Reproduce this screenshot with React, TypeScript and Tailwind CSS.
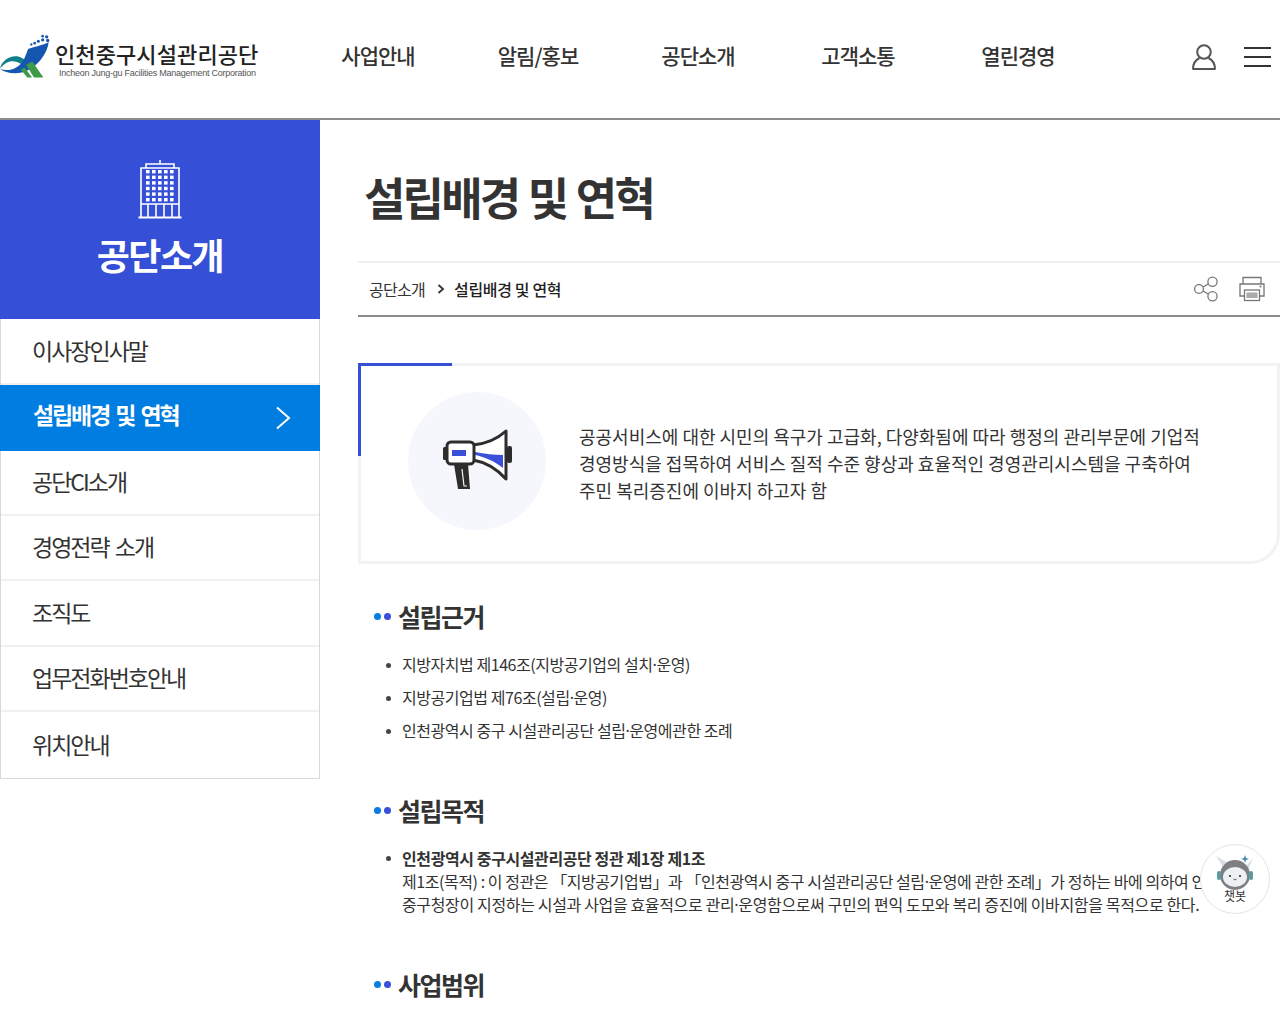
const navItems = ["사업안내", "알림/홍보", "공단소개", "고객소통", "열린경영"];

const sideItems = [
  { label: "이사장인사말", h: "h-[66px]" },
  { label: "설립배경 및 연혁", h: "h-[66px]", active: true },
  { label: "공단CI소개", h: "h-[65px]" },
  { label: "경영전략 소개", h: "h-[65px]" },
  { label: "조직도", h: "h-[66px]" },
  { label: "업무전화번호안내", h: "h-[65px]" },
  { label: "위치안내", h: "h-[66px]" },
];

const legalBasis = ["지방자치법 제146조(지방공기업의 설치·운영)", "지방공기업법 제76조(설립·운영)", "인천광역시 중구 시설관리공단 설립·운영에관한 조례"];

// the middle dot of the CJK font is too wide here, so it comes from the latin one
function withDots(text: string) {
  return text.split("·").map((part, i) => (
    <span key={i}>
      {i > 0 && <span className="leading-none font-['Noto_Sans',sans-serif]">·</span>}
      {part}
    </span>
  ));
}

function Logo() {
  return (
    <svg width="50" height="47" viewBox="0 40 150 140" className="shrink-0">
      <path d="M0 150 C5 125 30 108 55 113 C72 117 86 132 94 148 L80 152 C70 136 50 124 30 128 C15 132 8 140 0 150 Z" fill="#0f7f8c" />
      <path d="M85 90 C100 85 130 78 146 70 C142 100 122 130 92 150 C60 170 20 166 0 150 C25 160 55 150 70 125 C78 110 80 100 85 90 Z" fill="#1557b0" />
      <path d="M78 138 L102 176 L130 176 L97 128 Z" fill="#3d9a46" />
      <path d="M62 152 L82 176 L96 176 L74 146 Z" fill="#3d9a46" />
      <g fill="#1557b0">
        <circle cx="140" cy="54" r="5" />
        <circle cx="128" cy="52" r="4" />
        <circle cx="143" cy="65" r="5" />
        <circle cx="128" cy="63" r="5" />
        <circle cx="115" cy="67" r="4.5" />
        <circle cx="104" cy="73" r="4" />
        <circle cx="94" cy="77" r="3.5" />
      </g>
    </svg>
  );
}

function BuildingIcon() {
  const cells = [];
  for (let r = 0; r < 6; r++) {
    for (let c = 0; c < 5; c++) {
      cells.push(<rect key={`${r}-${c}`} x={8 + c * 6} y={11 + r * 5.6} width="3.6" height="3.4" fill="#fff" />);
    }
  }
  return (
    <svg width="44" height="60" viewBox="0 0 44 60" fill="none" stroke="#fff" strokeWidth="1.6">
      <path d="M3 58 V9 H41 V58" />
      <path d="M8 9 V5 H36 V9" />
      <path d="M22 5 V1" />
      <path d="M0.5 58.5 H43.5" strokeWidth="2" />
      <path d="M3 45 H41 M10 45 V58 M18 45 V58 M26 45 V58 M34 45 V58" />
      <g stroke="none">{cells}</g>
    </svg>
  );
}

function Megaphone() {
  return (
    <svg width="72" height="62" viewBox="0 0 72 62" fill="none">
      <path d="M33 16 C45 15 56 11 66 2 V50 C56 39 45 33 33 31 Z" fill="#fff" stroke="#2d2d2d" strokeWidth="3" strokeLinejoin="round" />
      <path d="M35 23 C45 25 54 26 63 26 V39 C54 32 45 28 35 26 Z" fill="#3a50d9" />
      <rect x="7" y="13" width="27" height="22" rx="4" fill="#fff" stroke="#2d2d2d" strokeWidth="3" />
      <rect x="3" y="18" width="4" height="13" rx="1.5" fill="#2d2d2d" />
      <rect x="67" y="17" width="5" height="17" rx="2" fill="#2d2d2d" />
      <rect x="12" y="21" width="14" height="6" fill="#3a50d9" />
      <path d="M14 35 H28 L30 60 H18 Z" fill="#2d2d2d" />
      <path d="M22 40 L24 57 H27" stroke="#f6f7fc" strokeWidth="1.2" />
    </svg>
  );
}

function ShareIcon() {
  return (
    <svg width="28" height="28" viewBox="0 0 28 28" fill="none" stroke="#777" strokeWidth="1.3">
      <circle cx="7" cy="14" r="4.4" />
      <circle cx="20.5" cy="6.8" r="4.6" />
      <circle cx="20.5" cy="21.2" r="4.6" />
      <path d="M11 12 L16.2 9 M11 16 L16.2 19" />
    </svg>
  );
}

function PrintIcon() {
  return (
    <svg width="28" height="28" viewBox="0 0 28 28" fill="none" stroke="#777" strokeWidth="1.3">
      <path d="M5 9 V2.5 H23 V9" />
      <path d="M6 21 H2 V9 H26 V21 H22" />
      <rect x="6.5" y="15" width="15" height="10.5" />
      <rect x="8.5" y="17.5" width="11" height="5.5" fill="#aaa" stroke="none" />
      <circle cx="22.5" cy="11.5" r="1" fill="#777" stroke="none" />
    </svg>
  );
}

function ChatbotFace() {
  return (
    <svg width="40" height="36" viewBox="0 0 40 36">
      <path d="M9 13 L1 1 L13 8 Z" fill="#d5dde6" />
      <path d="M31 11 L38 3 L33 15 Z" fill="#d5dde6" />
      <path d="M30 0 l1 3 3 1 -3 1 -1 3 -1 -3 -3 -1 3 -1 Z" fill="#3f88b8" />
      <circle cx="20" cy="20" r="15" fill="#7d7f83" />
      <rect x="2" y="16" width="4" height="9" rx="2" fill="#5d9aa0" />
      <rect x="34" y="16" width="4" height="9" rx="2" fill="#5d9aa0" />
      <ellipse cx="20" cy="22" rx="12" ry="10" fill="#eef1f4" />
      <circle cx="15" cy="21" r="1.1" fill="#333" />
      <circle cx="25" cy="21" r="1.1" fill="#333" />
      <path d="M18.5 24 Q20 26 21.5 24" stroke="#555" strokeWidth="1" fill="none" />
    </svg>
  );
}

function SectionTitle({ children }: { children: string }) {
  return (
    <h3 className="flex items-center pl-[16px] text-[25px] leading-[36px] font-bold tracking-[-1.5px] text-[#333]">
      <span className="h-[7px] w-[7px] rounded-full bg-[#0a7de0]" />
      <span className="ml-[3px] h-[7px] w-[7px] rounded-full bg-[#3a50d9]" />
      <span className="ml-[7px]">{children}</span>
    </h3>
  );
}

function Bullet() {
  return <span className="absolute top-[9px] left-[-16px] h-[5px] w-[5px] rounded-full bg-[#444]" />;
}

export default function App() {
  return (
    <div className="relative h-[1024px] w-[1280px] overflow-hidden bg-white text-[#333] font-['Noto_Sans_CJK_KR','Noto_Sans',sans-serif]">
      <header className="flex h-[120px] items-center border-b-2 border-[#8c8c8c] pb-[7px]">
        <div className="flex w-[298px] items-center">
          <Logo />
          <div className="ml-[5px] flex flex-col pt-[8px]">
            <span className="text-[22px] leading-[27px] font-medium tracking-[0.1px] text-[#222]">인천중구시설관리공단</span>
            <span className="mt-[1px] ml-[4px] text-[9px] leading-[11px] tracking-[-0.25px] whitespace-nowrap text-[#555] font-['Liberation_Sans',sans-serif]">
              Incheon Jung-gu Facilities Management Corporation
            </span>
          </div>
        </div>
        <nav className="flex">
          {navItems.map((item) => (
            <a key={item} className="w-[160px] text-center text-[21px] font-medium tracking-[-1px] text-[#333]">
              {item}
            </a>
          ))}
        </nav>
        <div className="mt-[2px] ml-auto flex items-center pr-[9px]">
          <svg width="28" height="28" viewBox="0 0 28 28" fill="none" stroke="#555" strokeWidth="2">
            <circle cx="14" cy="9" r="6.8" />
            <path d="M3 26 C3 20 6.5 16.5 9.5 15 M25 26 C25 20 21.5 16.5 18.5 15 M2.5 26 H25.5" />
          </svg>
          <div className="ml-[26px] flex w-[27px] flex-col gap-[7px]">
            <span className="h-[2px] bg-[#333]" />
            <span className="h-[2px] bg-[#333]" />
            <span className="h-[2px] bg-[#333]" />
          </div>
        </div>
      </header>

      <div className="flex">
        <aside className="w-[320px] shrink-0">
          <div className="flex h-[199px] flex-col items-center bg-[#3550d6] pt-[39px]">
            <BuildingIcon />
            <h2 className="mt-[9px] text-[36px] leading-[52px] font-bold tracking-[-1.5px] text-white">공단소개</h2>
          </div>
          <ul className="border-x border-b border-[#d8d8d8]">
            {sideItems.map((item) => (
              <li
                key={item.label}
                className={`flex items-center justify-between text-[23px] ${item.h} ${
                  item.active
                    ? "-mx-px border-0 bg-[#007de0] pr-[29px] pb-[7px] pl-[33px] text-[21px] font-bold tracking-[-2.1px] text-white [word-spacing:3px]"
                    : "border-b-2 border-[#f0f0f0] pb-[2px] pl-[31px] tracking-[-2px] text-[#333] [word-spacing:3px] last:border-b-0"
                }`}
              >
                {item.label}
                {item.active && (
                  <svg width="16" height="24" viewBox="0 0 16 24" fill="none" stroke="#fff" strokeWidth="2" className="mt-[7px]">
                    <path d="M2 1.5 L14 12 L2 22.5" />
                  </svg>
                )}
              </li>
            ))}
          </ul>
        </aside>

        <main className="ml-[38px] min-w-0 flex-1">
          <h1 className="h-[141px] pt-[44px] pl-[6px] text-[45px] leading-[66px] font-bold tracking-[-2.8px] text-[#333] [word-spacing:2px]">설립배경 및 연혁</h1>
          <div className="flex h-[56px] items-center border-y-2 border-t-[#f0f0f0] border-b-[#8c8c8c] pr-[14px] pb-[1px] pl-[11px] text-[16px] tracking-[-0.7px]">
            <span className="text-[#333]">공단소개</span>
            <svg width="8" height="10" viewBox="0 0 8 10" fill="none" stroke="#333" strokeWidth="1.8" className="mx-[12px]">
              <path d="M1.5 1 L6 5 L1.5 9" />
            </svg>
            <span className="-ml-[3px] font-medium tracking-[-0.35px] text-[#222]">설립배경 및 연혁</span>
            <span className="ml-auto flex items-center gap-[18px]">
              <ShareIcon />
              <PrintIcon />
            </span>
          </div>

          <section className="relative mt-[46px] flex h-[201px] items-center rounded-br-[30px] border-[3px] border-[#f2f2f2] pr-[60px] pl-[47px]">
            <span className="absolute top-[-3px] left-[-3px] h-[3px] w-[94px] bg-[#3550d6]" />
            <span className="absolute top-[-3px] left-[-3px] h-[93px] w-[3px] bg-[#3550d6]" />
            <div className="mt-[-5px] flex h-[138px] w-[138px] shrink-0 items-center justify-center rounded-full bg-[#f6f7fc] pr-[2px] pb-[2px]">
              <Megaphone />
            </div>
            <p className="ml-[33px] text-[18px] leading-[27px] tracking-normal whitespace-nowrap text-[#333]">
              공공서비스에 대한 시민의 욕구가 고급화, 다양화됨에 따라 행정의 관리부문에 기업적
              <br />
              경영방식을 접목하여 서비스 질적 수준 향상과 효율적인 경영관리시스템을 구축하여
              <br />
              주민 복리증진에 이바지 하고자 함
            </p>
          </section>

          <section className="mt-[34px]">
            <SectionTitle>설립근거</SectionTitle>
            <ul className="mt-[14px] pl-[44px] text-[16px] leading-[33px] tracking-[-0.45px] text-[#333]">
              {legalBasis.map((line) => (
                <li key={line} className="relative">
                  <span className="absolute top-[15px] left-[-16px] h-[5px] w-[5px] rounded-full bg-[#444]" />
                  {withDots(line)}
                </li>
              ))}
            </ul>
          </section>

          <section className="mt-[45px]">
            <SectionTitle>설립목적</SectionTitle>
            <div className="relative mt-[19px] ml-[44px] text-[16px] leading-[23px] tracking-[-0.35px] whitespace-nowrap text-[#333]">
              <Bullet />
              <strong className="font-bold tracking-[-0.4px]">인천광역시 중구시설관리공단 정관 제1장 제1조</strong>
              <br />
              <span className="tracking-[-0.44px]">{withDots("제1조(목적) : 이 정관은 「지방공기업법」과 「인천광역시 중구 시설관리공단 설립·운영에 관한 조례」가 정하는 바에 의하여 인천광역시")}</span>
              <br />
              {withDots("중구청장이 지정하는 시설과 사업을 효율적으로 관리·운영함으로써 구민의 편익 도모와 복리 증진에 이바지함을 목적으로 한다.")}
            </div>
          </section>

          <section className="mt-[50px]">
            <SectionTitle>사업범위</SectionTitle>
          </section>
        </main>
      </div>

      <button className="absolute top-[844px] left-[1200px] flex h-[70px] w-[70px] flex-col items-center rounded-full border border-[#e4e4e4] bg-white pt-[10px]">
        <ChatbotFace />
        <span className="mt-[-2px] text-[12px] leading-[14px] text-[#333]">챗봇</span>
      </button>
    </div>
  );
}
